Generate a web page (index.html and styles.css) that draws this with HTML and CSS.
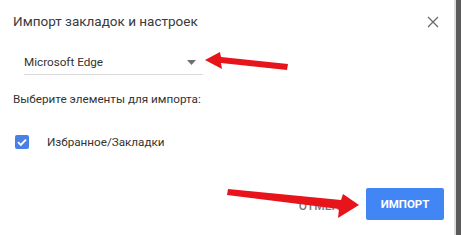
FILE: index.html
```html
<!DOCTYPE html>
<html lang="ru">
<head>
<meta charset="utf-8">
<link rel="stylesheet" href="styles.css">
</head>
<body>
<div class="dialog">
  <div class="header">
    <div class="title">Импорт закладок и настроек</div>
    <svg class="close" width="12" height="12" viewBox="0 0 12 12"><path d="M1 1L11 11M11 1L1 11" stroke="#6b6b6b" stroke-width="1.3"/></svg>
  </div>
  <div class="select">
    <span>Microsoft Edge</span>
    <svg class="caret" width="9" height="5" viewBox="0 0 9 5"><path d="M0 0H9L4.5 5Z" fill="#707070"/></svg>
  </div>
  <div class="label">Выберите элементы для импорта:</div>
  <div class="check-row">
    <svg class="checkbox" width="14" height="14" viewBox="0 0 14 14"><rect width="14" height="14" rx="2" fill="#4a80e6"/><path d="M3 7.2L5.8 10L11 4.6" stroke="#fff" stroke-width="1.9" fill="none"/></svg>
    <span>Избранное/Закладки</span>
  </div>
  <div class="actions">
    <span class="cancel">ОТМЕНА</span>
    <span class="primary">ИМПОРТ</span>
  </div>
</div>
<svg class="annot" width="461" height="235" viewBox="0 0 461 235">
  <polygon points="205,60 220,52 221,57 288,64 287,70 221,63 222,69" fill="#e8141b"/>
  <polygon points="228,189 341,200 343,194 359,205 338,218 339,209 227,195" fill="#e8141b"/>
</svg>
</body>
</html>
```
FILE: styles.css
```css
html, body {
  margin: 0;
  padding: 0;
}
body {
  width: 461px;
  height: 235px;
  background: #5a5a5a;
  font-family: Roboto, "Liberation Sans", Arial, sans-serif;
  color: #333;
  overflow: hidden;
  position: relative;
}
.dialog {
  width: 456px;
  height: 235px;
  background: #fff;
  border-right: 2px solid #dcdcdc;
  box-sizing: border-box;
  display: flex;
  flex-direction: column;
}
.header {
  display: flex;
  justify-content: space-between;
  align-items: center;
  padding: 11px 15px 0 13px;
  height: 20px;
}
.title {
  font-size: 13.5px;
  color: #3a3a3a;
}
.close {
  margin-top: 1px;
}
.select {
  margin: 20px 0 0 24px;
  width: 179px;
  height: 24px;
  box-sizing: border-box;
  border-bottom: 1px solid #dadada;
  display: flex;
  justify-content: space-between;
  align-items: center;
  font-size: 11.7px;
  padding-right: 7px;
  padding-bottom: 2px;
}
.caret {
  margin-top: 1px;
}
.label {
  font-size: 11.7px;
  margin: 17px 0 0 13px;
}
.check-row {
  display: flex;
  align-items: center;
  margin: 29px 0 0 15px;
  font-size: 11.7px;
}
.check-row span {
  margin-left: 18px;
}
.actions {
  margin-top: auto;
  margin-bottom: 15px;
  display: flex;
  justify-content: flex-end;
  align-items: center;
  padding-right: 10px;
  gap: 18px;
}
.cancel {
  font-size: 12px;
  font-weight: 500;
  color: #777;
  margin-top: 3px;
}
.primary {
  width: 78px;
  height: 32px;
  border-radius: 2px;
  background: #4285f4;
  color: #fff;
  font-size: 11.5px;
  font-weight: 700;
  display: flex;
  align-items: center;
  justify-content: center;
}
.annot {
  position: absolute;
  left: 0;
  top: 0;
}
```
